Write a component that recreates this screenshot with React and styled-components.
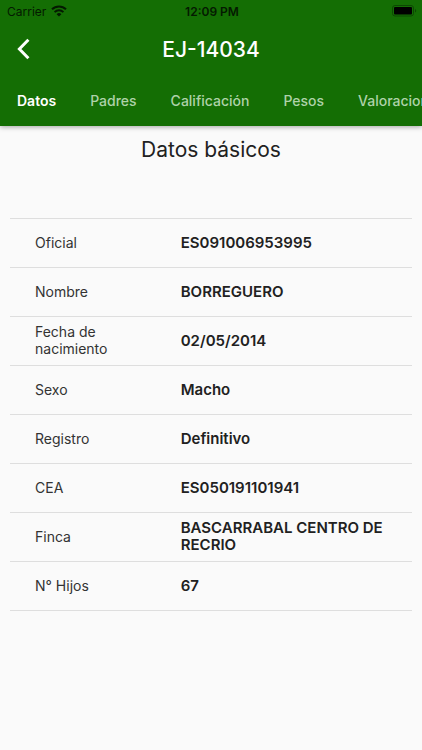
import styled, { createGlobalStyle } from 'styled-components';

const GlobalStyle = createGlobalStyle`
    * {
        box-sizing: border-box;
    }
    body {
        margin: 0;
        background-color: #fafafa;
        color: #212121;
        font-family: Inter, "Liberation Sans", sans-serif;
    }
`
const Header = styled.header`
    background-color: #146e04;
    color: white;
    box-shadow: 0 1px 5px rgba(0, 0, 0, 0.35);
`
const StatusBar = styled.div`
    display: grid;
    grid-template-columns: 1fr auto 1fr;
    align-items: center;
    height: 22px;
    padding: 0 5px 0 7px;
    color: #041a01;
    font-size: 12px;
`
const Carrier = styled.div`
    display: flex;
    align-items: center;
    gap: 5px;
`
const Clock = styled.time`
    font-weight: 600;
`
const Battery = styled.svg`
    justify-self: end;
`
const TitleBar = styled.div`
    display: grid;
    grid-template-columns: 46px 1fr 46px;
    align-items: center;
    height: 54px;
`
const BackButton = styled.button`
    display: flex;
    align-items: center;
    justify-content: center;
    height: 46px;
    padding: 0;
    border: none;
    background: none;
    color: white;
    cursor: pointer;
`
const Title = styled.h1`
    margin: 0;
    font-size: 21px;
    font-weight: 500;
    text-align: center;
`
const Tabs = styled.nav`
    display: flex;
    height: 50px;
    overflow: hidden;
`
const Tab = styled.button`
    flex: none;
    padding: 0 17px 2px;
    border: none;
    background: none;
    color: ${props => props.$active ? 'white' : '#aed2a9'};
    font-family: inherit;
    font-size: 14px;
    font-weight: ${props => props.$active ? 600 : 500};
    cursor: pointer;
`
const Main = styled.main`
    padding: 10px;
`
const Heading = styled.h2`
    margin: 0 0 55px;
    font-size: 21px;
    font-weight: 400;
    line-height: 27px;
    text-align: center;
`
const Table = styled.table`
    width: 100%;
    border-collapse: collapse;
    border-bottom: 1px solid #dedede;
    font-size: 14px;
    line-height: 17px;
    text-align: left;
`
const Row = styled.tr`
    height: 49px;
    border-top: 1px solid #dedede;
`
const Label = styled.th`
    width: 36%;
    padding: 0 25px 2px;
    color: #333333;
    font-weight: 400;
`
const Value = styled.td`
    padding: 0 26px 2px;
    font-size: 15px;
    font-weight: 600;
`

const tabs = ['Datos', 'Padres', 'Calificación', 'Pesos', 'Valoraciones']

const rows = [
  ['Oficial', 'ES091006953995'],
  ['Nombre', 'BORREGUERO'],
  ['Fecha de nacimiento', '02/05/2014'],
  ['Sexo', 'Macho'],
  ['Registro', 'Definitivo'],
  ['CEA', 'ES050191101941'],
  ['Finca', 'BASCARRABAL CENTRO DE RECRIO'],
  ['N° Hijos', '67'],
]

const App = () => {
  return (
    <>
      <GlobalStyle />
      <Header>
        <StatusBar>
          <Carrier>
            Carrier
            <svg width="16" height="12" viewBox="0 0 16 12" fill="none" stroke="currentColor" strokeWidth="2">
              <path d="M1 4.3a10 10 0 0 1 14 0" />
              <path d="M3.6 7.1a6.3 6.3 0 0 1 8.8 0" />
              <path d="M8 11.6 5.6 9.2a3.5 3.5 0 0 1 4.8 0z" fill="currentColor" stroke="none" />
            </svg>
          </Carrier>
          <Clock>12:09 PM</Clock>
          <Battery width="25" height="12" viewBox="0 0 25 12">
            <rect x="0.5" y="0.5" width="21" height="10.5" rx="2.5" fill="none" stroke="#0d4803" />
            <rect x="2" y="2" width="18" height="7.5" rx="1" fill="#000000" />
            <path d="M23 4v3.6c1.6-.6 1.6-3 0-3.6z" fill="#0d4803" />
          </Battery>
        </StatusBar>
        <TitleBar>
          <BackButton aria-label="Volver">
            <svg width="13" height="22" viewBox="0 0 13 22" fill="none" stroke="currentColor" strokeWidth="3">
              <path d="M11.4 1.8 2.4 11l9 9.2" />
            </svg>
          </BackButton>
          <Title>EJ-14034</Title>
        </TitleBar>
        <Tabs>
          {tabs.map((tab, i) => (
            <Tab key={tab} $active={i === 0}>{tab}</Tab>
          ))}
        </Tabs>
      </Header>
      <Main>
        <Heading>Datos básicos</Heading>
        <Table>
          <tbody>
            {rows.map(([label, value]) => (
              <Row key={label}>
                <Label scope="row">{label}</Label>
                <Value>{value}</Value>
              </Row>
            ))}
          </tbody>
        </Table>
      </Main>
    </>
  )
}

export default App
